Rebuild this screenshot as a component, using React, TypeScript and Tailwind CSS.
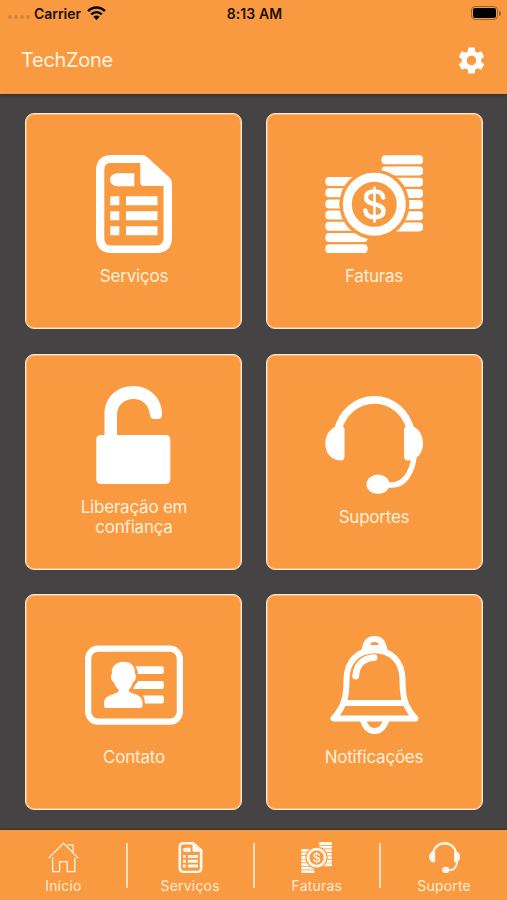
import React from 'react';

type IconProps = { className?: string };

function DocumentIcon({ className }: IconProps) {
  return (
    <svg viewBox="0 0 98 98" className={className} fill="currentColor">
      <path
        fillRule="evenodd"
        d="M27 0H57Q60 0 62 2L84 22Q87 24.500 87 28V82Q87 98 71 98H27Q11 98 11 82V16Q11 0 27 0ZM25.500 8Q19.300 8 19.300 15V83Q19.300 90.500 26 90.500H71Q78.500 90.500 78.500 83V31H59Q55.300 31 55.300 27V8Z"
      />
      <path d="M32 18.300H49.300V31.300H32Q25 30 25 24.700Q25 19.500 32 18.300Z" />
      <path d="M25.300 41.300h9v9h-9zM41 41.300h31.500v9H41zM25.300 56.300h9v9h-9zM41 56.300h31.500v9H41zM25.300 71.300h9v9h-9zM41 71.300h31.500v9H41z" />
    </svg>
  );
}

function CoinsIcon({ className }: IconProps) {
  const right = [0.3, 11.5, 22.7, 33.9, 45.1, 56.3, 67.5];
  const left = [22, 33.2, 44.4, 55.6, 66.8, 78, 89.2];
  return (
    <svg viewBox="0 0 98 98" className={className} fill="currentColor">
      {right.map((y) => (
        <rect key={y} x="56.500" y={y} width="41.700" height="9" rx="4" />
      ))}
      {left.map((y) => (
        <rect key={y} x="0.300" y={y} width="42.300" height="9" rx="4" />
      ))}
      <circle cx="49.300" cy="49.300" r="35" fill="#fa9a40" />
      <circle cx="49.300" cy="49.300" r="27" fill="none" stroke="currentColor" strokeWidth="9" />
      <path
        d="M58.200 42.500C57.500 38 54 36.400 49.500 36.400C44.500 36.400 41 38.300 41 42.400C41 51.500 58.500 46.800 58.500 56C58.500 60.300 55 62.300 49.700 62.300C44.200 62.300 40.700 60.300 40.300 55.500"
        fill="none"
        stroke="currentColor"
        strokeWidth="4.400"
        strokeLinecap="round"
      />
      <path d="M49.500 32.500V66.500" stroke="currentColor" strokeWidth="2.600" strokeLinecap="round" />
    </svg>
  );
}

function UnlockIcon({ className }: IconProps) {
  return (
    <svg viewBox="0 0 98 98" className={className} fill="currentColor">
      <rect x="11.300" y="49" width="74" height="49" rx="4.500" />
      <path d="M19.500 51V28.500C19.500 11 32 0 48.500 0C64.500 0 77 12 77 28V29Q77 33 73 33H69Q65.500 33 65 29C64 19 57.500 13 48.500 13C39 13 32 19.500 32 29V51Z" />
    </svg>
  );
}

function HeadsetIcon({ className }: IconProps) {
  return (
    <svg viewBox="0 0 98 98" className={className} fill="currentColor">
      <path
        d="M12.500 35C17 17 31 3.900 49.500 3.900S81.500 17 86 35"
        fill="none"
        stroke="currentColor"
        strokeWidth="7.600"
      />
      <path d="M15 30.500H17Q19.500 30.500 19.500 34V60Q19.500 64.500 16 64.500C6 64 0.300 57 0.300 47.500C0.300 40 3.500 34.500 9.500 31Z" />
      <path d="M83 30.500H81.500Q79 31 79 34V60Q79 64.500 83 64.500C92 64 98 57 98 47.500C98 40 95 34.500 89.500 31Z" />
      <path
        d="M89 61C87 77 79 89 67 89H60"
        fill="none"
        stroke="currentColor"
        strokeWidth="5.500"
      />
      <ellipse cx="53" cy="88.300" rx="11.500" ry="9.700" />
    </svg>
  );
}

function ContactIcon({ className }: IconProps) {
  return (
    <svg viewBox="0 0 98 98" className={className} fill="currentColor">
      <rect x="3.100" y="12.700" width="91.800" height="73" rx="10" fill="none" stroke="currentColor" strokeWidth="6.300" />
      <path d="M38.500 25.800C46 25.800 50.500 30.500 50 37.500C52 40 50.500 45 48 46.500C47 50 45.500 52 44 53.500V56C49 58.500 57.500 58.500 57.500 67V70Q57.500 72 55.500 72H21Q19 72 19 70V67C19 59 29 58.500 33.500 56V53.500C31.500 52 30 49.500 29 46.500C26 45 25 40 27 37.500C26 31 31 25.800 38.500 25.800Z" />
      <path d="M50.500 30.300H77Q78.800 30.300 78.800 32V36Q78.800 38 77 38H53Q53 34 50.500 30.300ZM53.500 45H77Q78.800 45 78.800 47V51Q78.800 53 77 53H48Q50 48 53.500 45ZM58 59.500H77Q78.800 59.500 78.800 61.500V65.500Q78.800 67.500 77 67.500H60Q60 63 58 59.500Z" />
    </svg>
  );
}

function BellIcon({ className }: IconProps) {
  return (
    <svg viewBox="0 0 98 98" className={className} fill="none" stroke="currentColor">
      <path
        fill="currentColor"
        stroke="none"
        fillRule="evenodd"
        d="M36.300 15.500C38 5 41 0 49.500 0S61 5 62.700 15.500ZM45.300 9Q45.300 6 49.500 6Q53.700 6 53.700 9Z"
      />
      <path
        d="M49.500 14.300C33 14.300 22 25 21.500 43C21.500 60 20 70 8.500 82.500H90.500C79 70 77.500 60 77.500 43C77 25 66 14.300 49.500 14.300Z"
        strokeWidth="6"
        strokeLinejoin="round"
      />
      <path d="M20 67H79" strokeWidth="6" />
      <path d="M30.700 40C31.500 29 38 22 49 21.600" strokeWidth="6.800" strokeLinecap="round" />
      <path d="M38 84C40 91 43 95 49.500 95S59 91 61.500 84" strokeWidth="6.200" />
    </svg>
  );
}

function HomeIcon({ className }: IconProps) {
  return (
    <svg viewBox="0 0 31 31" className={className} fill="none" stroke="currentColor" strokeWidth="1.200">
      <path d="M0.700 16.200L15.500 1.200L30.300 16.200" />
      <path d="M19.500 2.800H25.200V10.500" />
      <path d="M4.600 15.500V29.700H11.600V19.700H19.200V29.700H26.800V15.500" />
    </svg>
  );
}

function WifiIcon() {
  return (
    <svg viewBox="0 0 18 14" className="ml-[6px] h-[14.500px] w-[19px] text-black" fill="none" stroke="currentColor">
      <path d="M0.900 4.900C5.500 0.200 12.500 0.200 17.100 4.900" strokeWidth="2.500" />
      <path d="M3.900 8.100C7 5.200 11 5.200 14.100 8.100" strokeWidth="2.400" />
      <path d="M6 10.400Q9 7.800 12 10.400L9 13.600Z" fill="currentColor" stroke="none" />
    </svg>
  );
}

function GearIcon() {
  return (
    <svg viewBox="2 2 20 20" className="h-[27px] w-[27px] text-white" fill="currentColor">
      <path d="M19.140 12.940c.04-.3.060-.61.060-.94 0-.32-.02-.64-.07-.94l2.030-1.580c.18-.14.230-.41.120-.61l-1.920-3.320c-.12-.22-.37-.29-.59-.22l-2.390.96c-.5-.38-1.030-.7-1.620-.94l-.36-2.540c-.04-.24-.24-.41-.48-.41h-3.840c-.24 0-.43.170-.47.410l-.36 2.540c-.59.240-1.130.570-1.620.94l-2.390-.96c-.22-.08-.47 0-.59.220L2.740 8.870c-.12.210-.08.470.12.610l2.030 1.580c-.05.300-.09.630-.09.940s.02.640.07.940l-2.030 1.580c-.18.140-.23.410-.12.610l1.920 3.320c.12.220.37.290.59.220l2.390-.96c.5.380 1.030.7 1.620.94l.36 2.540c.05.240.24.410.48.410h3.840c.24 0 .44-.17.47-.41l.36-2.540c.59-.24 1.130-.56 1.620-.94l2.390.96c.22.080.47 0 .59-.22l1.920-3.320c.12-.22.070-.47-.12-.61l-2.010-1.580zM12 15.500c-1.930 0-3.500-1.570-3.500-3.500s1.570-3.500 3.500-3.500 3.500 1.570 3.500 3.500-1.570 3.500-3.500 3.500z" />
    </svg>
  );
}

function Battery() {
  return (
    <div className="flex items-center gap-[1px]">
      <div className="h-[14px] w-[27px] rounded-[4px] border border-[#9b6530] p-[1px]">
        <div className="h-full w-full rounded-[2px] bg-black" />
      </div>
      <div className="h-[5px] w-[2px] rounded-r-full bg-[#9b6530]" />
    </div>
  );
}

type Item = { label: string; Icon: (p: IconProps) => React.JSX.Element };

const cards: Item[] = [
  { label: 'Serviços', Icon: DocumentIcon },
  { label: 'Faturas', Icon: CoinsIcon },
  { label: 'Liberação em confiança', Icon: UnlockIcon },
  { label: 'Suportes', Icon: HeadsetIcon },
  { label: 'Contato', Icon: ContactIcon },
  { label: 'Notificações', Icon: BellIcon },
];

const tabs: Item[] = [
  { label: 'Início', Icon: HomeIcon },
  { label: 'Serviços', Icon: DocumentIcon },
  { label: 'Faturas', Icon: CoinsIcon },
  { label: 'Suporte', Icon: HeadsetIcon },
];

export default function App() {
  return (
    <div className="flex h-[900px] w-[507px] flex-col overflow-hidden bg-[#464344] font-[Inter,'Liberation_Sans',sans-serif]">
      <header className="z-10 flex h-[94px] shrink-0 flex-col bg-[#fa9a40] shadow-[0_1px_4px_rgba(0,0,0,0.4)]">
        <div className="grid h-[26px] grid-cols-3 items-center pl-2 pr-[6px] text-[14px] font-semibold text-[#1c1005]">
          <div className="flex items-center">
            <div className="mr-[4px] mt-[8px] flex gap-[2px]">
              {[0, 1, 2, 3].map((i) => (
                <span key={i} className="size-[4px] rounded-full bg-[#d28339]" />
              ))}
            </div>
            <span className="tracking-[-0.05px]">Carrier</span>
            <WifiIcon />
          </div>
          <span className="whitespace-nowrap text-center tracking-[0.1px]">8:13 AM</span>
          <div className="flex justify-end">
            <Battery />
          </div>
        </div>
        <div className="flex h-[68px] items-center justify-between pl-[21px] pr-[22.5px]">
          <h1 className="text-[20px] tracking-[-0.3px] text-[#fff3e2]">TechZone</h1>
          <GearIcon />
        </div>
      </header>

      <main className="grid flex-1 grid-cols-[217px_217px] grid-rows-[216px_216px_216px] content-start justify-center gap-x-[24px] gap-y-[24.5px] pl-[1px] pt-[19px]">
        {cards.map(({ label, Icon }) => (
          <button
            key={label}
            className="flex flex-col items-center justify-center rounded-[9px] border border-[#ffe9d2] bg-[#fa9a40] shadow-[inset_0_0_0_1px_rgba(255,238,218,0.4)] odd:pl-[1px] even:pr-[1px]"
          >
            <Icon className="size-[98px] text-white" />
            <span className="mt-[13px] w-[130px] text-center text-[17px] leading-[20.5px] tracking-[-0.22px] text-[#fff0dc]">
              {label}
            </span>
          </button>
        ))}
      </main>

      <nav className="grid h-[70px] shrink-0 grid-cols-4 bg-[#fa9a40] shadow-[0_-1px_2px_rgba(0,0,0,0.3)]">
        {tabs.map(({ label, Icon }, i) => (
          <div key={label} className="flex items-start">
            <div className="flex flex-1 flex-col items-center pl-[1px] pt-[12px]">
              <Icon className="size-[31px] text-[#fff8ee]" />
              <span className="mt-[4px] text-[14px] leading-[17px] tracking-[0.2px] text-[#ffecd5]">{label}</span>
            </div>
            {i < 3 && <div className="-mr-[1px] mt-[13px] h-[45px] w-[2px] bg-[#ffdfbd]" />}
          </div>
        ))}
      </nav>
    </div>
  );
}
